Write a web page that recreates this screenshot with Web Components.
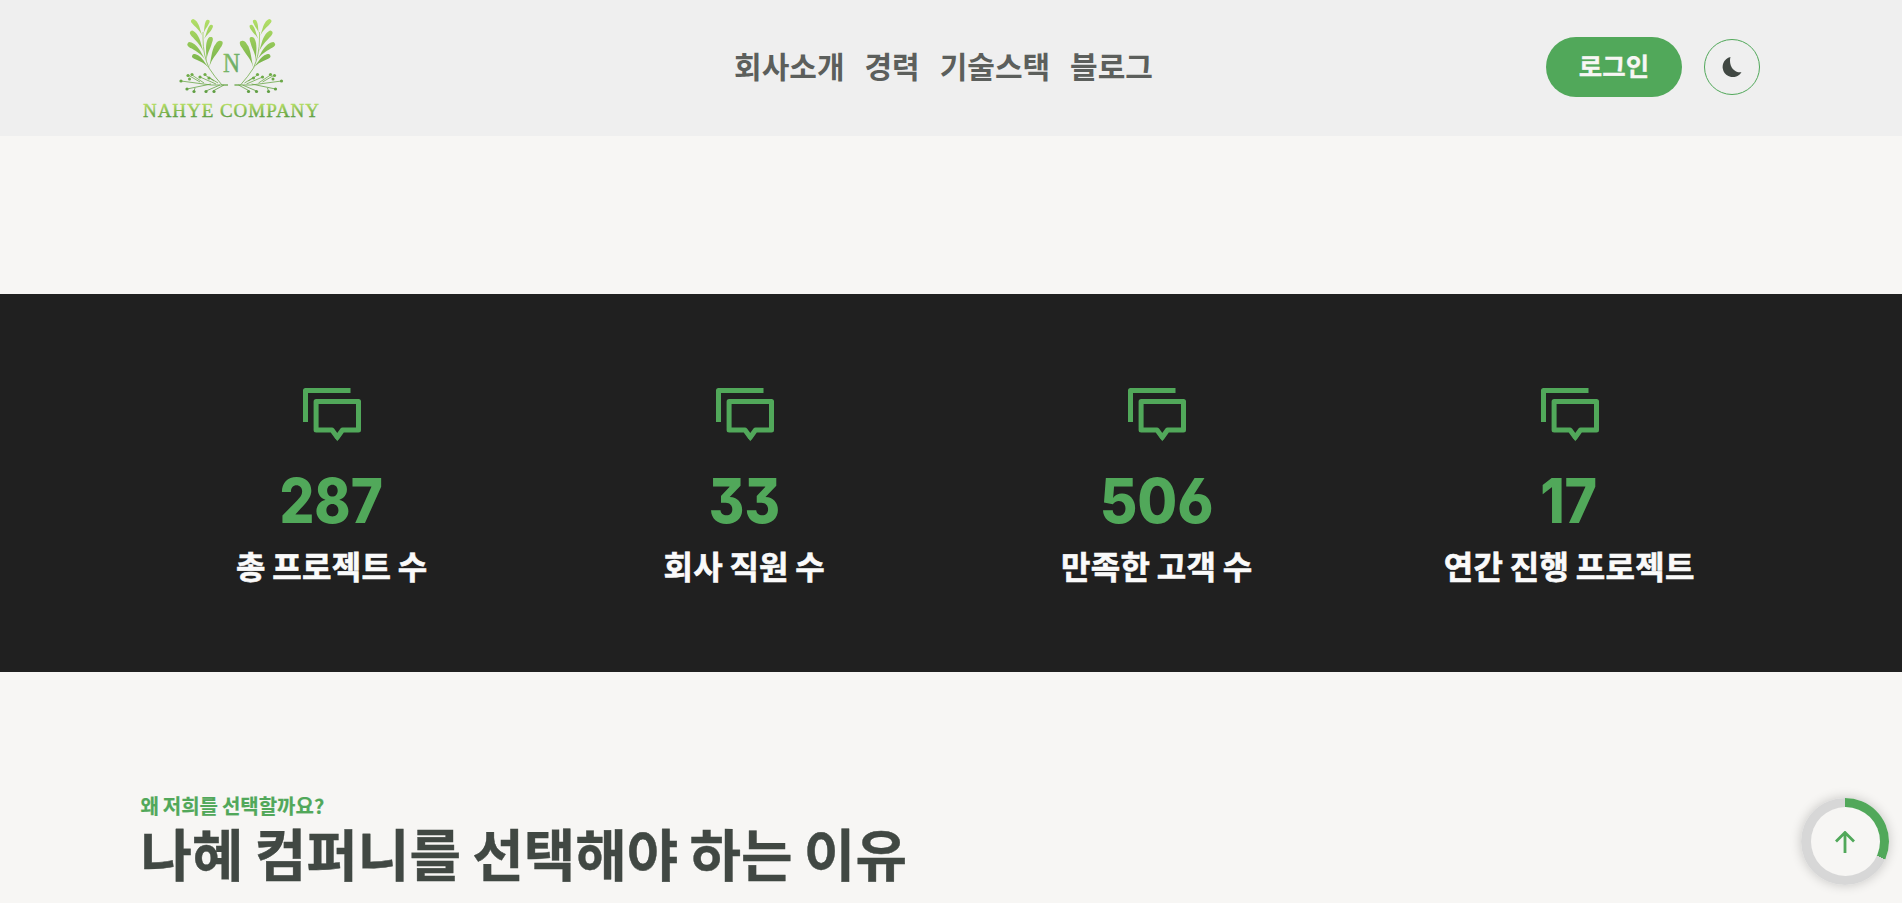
<!DOCTYPE html>
<html lang="ko">
<head>
<meta charset="utf-8">
<title>나혜 컴퍼니</title>
<style>
body{margin:0;background:#f7f6f4;font-family:"Noto Sans CJK KR","Noto Sans",sans-serif;overflow:hidden}
</style>
</head>
<body>
<site-page></site-page>
<script>
const define=(name,html,setup)=>customElements.define(name,class extends HTMLElement{
  constructor(){super();this.attachShadow({mode:'open'}).innerHTML=html;}
  connectedCallback(){if(setup)setup(this.shadowRoot,this);}
});

// Slender leaf with a rounded tip, from its base on the stem to its tip
const leaf=(bx,by,tx,ty,w,bend)=>{
  const l=Math.hypot(tx-bx,ty-by),dx=(tx-bx)/l,dy=(ty-by)/l;
  const p=(t,s)=>(bx+dx*l*t-dy*s).toFixed(2)+' '+(by+dy*l*t+dx*s).toFixed(2);
  return `M${p(0,0)}C${p(.35,bend)} ${p(.5,bend+w*.5)} ${p(.78,bend*.6+w*.5)}C${p(.95,w*.55)} ${p(1.03,w*.3)} ${p(1,0)}C${p(1,-w*.5)} ${p(.9,-w*.55)} ${p(.74,bend*.6-w*.5)}C${p(.5,bend-w*.4)} ${p(.35,bend-w*.05)} ${p(0,0)}Z`;
};
const leaves=[[72.5,36,62,19.5,4.5,1],[73.5,34,78.5,20,3.8,-.5],[73.5,40,82,25,3.8,0],[74,53,61,31,5,1.5],[76,61,58,43,5,2],[79,68,62.5,55,4.6,1.5],[76.5,62,81,37,5.4,-1.2],[79,68,91,41,6.4,-1.5]].map(a=>leaf(...a)).join('');

define('company-logo',`<style>:host{display:block;width:200px;height:136px}svg{display:block}</style>
<svg width="200" height="136" viewBox="0 0 200 136">
<defs>
<linearGradient id="g" gradientUnits="userSpaceOnUse" x1="0" y1="18" x2="0" y2="93"><stop offset="0" stop-color="#b4e068"/><stop offset=".55" stop-color="#7fb84e"/><stop offset="1" stop-color="#5f9e43"/></linearGradient>
<linearGradient id="t" x1="0" y1="0" x2="0" y2="1"><stop offset=".2" stop-color="#b2dc62"/><stop offset=".85" stop-color="#589a40"/></linearGradient>
<linearGradient id="n" x1="0" y1="0" x2="1" y2="1"><stop offset="0" stop-color="#8cc063"/><stop offset="1" stop-color="#5da56b"/></linearGradient>
<g id="b">
<path d="M98 85H92Q84 76 79 68Q73 55 73 38V32" fill="none" stroke="url(#g)" stroke-width=".8"/>
<path d="${leaves}" fill="url(#g)"/>
<path d="M98 85H81Q66 83 51 81M81 84L57 89M90 85L76 91M94 85L83 91M74 83L62 75M70 82L58 75M86 84L70 77M88 83L80 78M84 81L75 75M65 88L64 91" fill="none" stroke="url(#g)" stroke-width=".8"/>
<g fill="url(#g)"><circle cx="51" cy="81" r="1.6"/><circle cx="57" cy="89" r="1.6"/><circle cx="64" cy="91.5" r="1.6"/><circle cx="76" cy="91.5" r="1.6"/><circle cx="84" cy="91.5" r="1.6"/><circle cx="62" cy="74.5" r="1.6"/><circle cx="58" cy="75.5" r="1.6"/><circle cx="59.500" cy="79" r="1.5"/><circle cx="70" cy="77" r="1.6"/><circle cx="75" cy="74.5" r="1.6"/><circle cx="79" cy="78" r="1.6"/></g>
</g>
</defs>
<use href="#b"/><use href="#b" transform="translate(202.5 0) scale(-1 1)"/>
<text x="101.500" y="71.500" text-anchor="middle" font-family="Liberation Serif" font-size="28" textLength="17" lengthAdjust="spacingAndGlyphs" fill="url(#n)" stroke="url(#n)" stroke-width=".5">N</text>
<text x="13" y="117" font-family="Liberation Serif" font-size="19" textLength="176" lengthAdjust="spacing" fill="url(#t)" stroke="url(#t)" stroke-width=".4">NAHYE COMPANY</text>
</svg>`);

define('nav-link',`<style>:host{display:block;font-size:30px;line-height:44px;font-weight:700;color:#5c5f5c}</style><slot></slot>`);

define('login-button',`<style>:host{display:block}button{display:block;width:136px;height:60px;padding:0 0 5px;border:0;border-radius:30px;background:#51a85a;color:#f7f6f4;font:700 25.500px/55px "Noto Sans CJK KR",sans-serif;-webkit-text-stroke:.3px #f7f6f4}</style><button><slot></slot></button>`);

define('theme-toggle',`<style>:host{display:block}button{display:flex;align-items:center;justify-content:center;box-sizing:border-box;width:56px;height:56px;padding:0;border:1px solid #51a85a;border-radius:50%;background:none}svg{display:block}</style>
<button aria-label="theme"><svg width="20" height="20" viewBox="0 0 20 20"><path d="M8.500 0C6.300 7.800 11.500 16.200 19.500 15.300A10.200 10.200 0 1 1 8.500 0Z" fill="#414843"/></svg></button>`);

define('site-header',`<style>
:host{display:grid;grid-template-columns:1fr auto 1fr;align-items:center;height:136px;box-sizing:border-box;padding:0 142px 0 130px;background:#efefef}
nav{display:flex;gap:20px;margin:0 0 7px -3px}
.tools{display:flex;gap:22px;align-items:center;justify-content:flex-end;margin-top:-2px}
</style>
<company-logo></company-logo>
<nav><nav-link>회사소개</nav-link><nav-link>경력</nav-link><nav-link>기술스택</nav-link><nav-link>블로그</nav-link></nav>
<div class="tools"><login-button>로그인</login-button><theme-toggle></theme-toggle></div>`);

define('stat-item',`<style>
:host{display:flex;flex-direction:column;align-items:center}
svg{display:block}
.n{height:64px;line-height:64px;margin:27px 1.500px 0 0;color:#51a85a;font-family:Inter,sans-serif;font-size:61.500px;font-weight:800;font-feature-settings:"cv09","cv03"}
.l{margin:9px 1px 0 0;height:46px;line-height:46px;font-size:32px;letter-spacing:.3px;word-spacing:-2.800px;font-weight:700;color:#fafafa;white-space:nowrap;-webkit-text-stroke:.6px #fafafa}
</style>
<svg width="58" height="54" viewBox="0 0 58 54" fill="none" stroke="#51a85a" stroke-width="5" stroke-linejoin="round"><path d="M2.500 34V2.500H47.500"/><path d="M34.300 49.200L29 42H13.100V13.500H55.500V42H39.500L34.300 49.200Z"/><path d="M30.300 47L34.300 53.300L38.300 47Z" fill="#51a85a" stroke="none"/></svg>
<div class="n"></div><div class="l"><slot></slot></div>`,(r,e)=>{const n=r.querySelector('.n');n.textContent=e.getAttribute('value');n.style.transform=`scaleX(${e.getAttribute('stretch')||1})`;});

define('stats-band',`<style>:host{display:grid;grid-template-columns:repeat(4,1fr);box-sizing:border-box;height:378px;padding:94px 126px 0;background:#202020}</style>
<stat-item value="287" stretch=".89">총 프로젝트 수</stat-item><stat-item value="33" stretch=".88">회사 직원 수</stat-item><stat-item value="506" stretch=".94">만족한 고객 수</stat-item><stat-item value="17" stretch=".9">연간 진행 프로젝트</stat-item>`);

define('reason-heading',`<style>:host{display:block;padding:119px 140.500px 0}
p{margin:0;font-size:20px;line-height:29px;font-weight:700;word-spacing:-1.700px;color:#51a85a;-webkit-text-stroke:.2px #51a85a}
h2{margin:-2px 0 0;font-size:56px;line-height:68px;font-weight:700;word-spacing:-4.400px;color:#414843;-webkit-text-stroke:.4px #414843}</style>
<p>왜 저희를 선택할까요?</p><h2>나혜 컴퍼니를 선택해야 하는 이유</h2>`);

define('scroll-top',`<style>:host{position:fixed;right:13px;bottom:18px;width:88px;height:87px;border-radius:50%;box-shadow:0 0 12px rgba(0,0,0,.2);background:conic-gradient(#51a85a 0 31.700%,#d7d7d7 31.700%);display:grid;place-items:center}
div{width:69px;height:69px;border-radius:50%;background:#f7f6f4;display:grid;place-items:center}</style>
<div><svg width="20" height="22" viewBox="0 0 20 22" fill="none" stroke="#51a85a" stroke-width="2.800"><path d="M10 22V2M1 10.500L10 1.500L19 10.500"/></svg></div>`);

define('site-page',`<style>:host{display:block;height:903px;overflow:hidden}stats-band{margin-top:158px}</style>
<site-header></site-header><stats-band></stats-band><reason-heading></reason-heading><scroll-top></scroll-top>`);
</script>
</body>
</html>
